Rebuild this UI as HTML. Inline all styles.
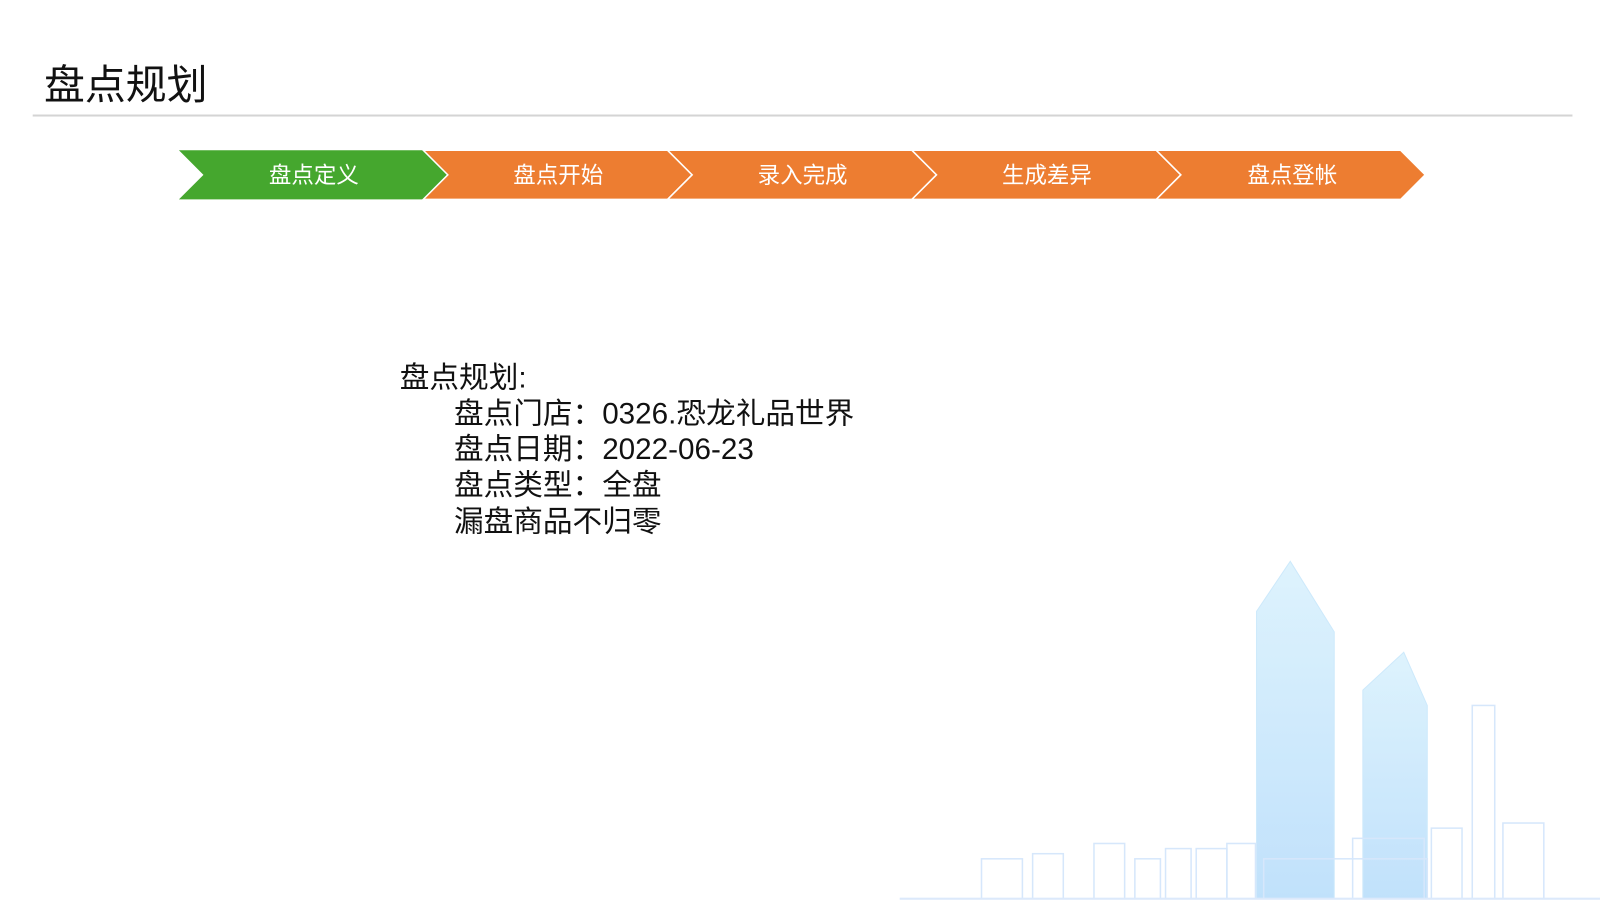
<!DOCTYPE html>
<html><head><meta charset="utf-8"><style>
body{margin:0;width:1600px;height:900px;background:#fff;overflow:hidden;position:relative;font-family:"Liberation Sans","Noto Sans CJK SC",sans-serif}
#w{position:absolute;left:0;top:0;width:1565px;height:880px;transform:scale(1.0224);transform-origin:0 0}
.t{position:absolute;left:43px;top:58px;font-size:40px;color:#111;line-height:52px}
.hr{position:absolute;left:32px;top:112px;width:1506px;height:2px;background:#d4d4d4}
.b{position:absolute;font-size:29px;color:#111;line-height:35px}
</style></head><body><div id="w">
<div class="t">盘点规划</div>
<div class="hr"></div>
<svg style="position:absolute;left:0;top:0" width="1565" height="880">
<defs><linearGradient id="g" x1="0" y1="0" x2="0" y2="1"><stop offset="0" stop-color="#d8f1fd"/><stop offset="1" stop-color="#b6dcfb"/></linearGradient></defs>
<polygon points="175,147 414,147 438,171 414,195 175,195 199,171" fill="#45a72e"/>
<g fill="#ed7d31" stroke="#fff" stroke-width="1.5">
<polygon points="414,147 653,147 677,171 653,195 414,195 438,171"/>
<polygon points="653,147 892,147 916,171 892,195 653,195 677,171"/>
<polygon points="892,147 1131,147 1155,171 1131,195 892,195 916,171"/>
<polygon points="1131,147 1370,147 1394,171 1370,195 1131,195 1155,171"/>
</g>
<g font-size="22" fill="#fff" text-anchor="middle" font-family="Liberation Sans,Noto Sans CJK SC,sans-serif">
<text x="307" y="179">盘点定义</text><text x="546" y="179">盘点开始</text><text x="785" y="179">录入完成</text><text x="1024" y="179">生成差异</text><text x="1264" y="179">盘点登帐</text>
</g>
<g opacity="0.85">
<polygon points="1229,598 1262,549 1305,618 1305,880 1229,880" fill="url(#g)" stroke="#c5e6fb"/>
<polygon points="1333,675 1373,638 1396,690 1396,880 1333,880" fill="url(#g)" stroke="#c5e6fb"/>
<g fill="none" stroke="#cfe3fb" stroke-width="1.5">
<rect x="1236" y="840" width="160" height="40"/><rect x="1323" y="820" width="70" height="60"/>
<rect x="1400" y="810" width="30" height="70"/><rect x="1440" y="690" width="22" height="190"/>
<rect x="1470" y="805" width="40" height="75"/>
<rect x="1070" y="825" width="30" height="55"/><rect x="1110" y="840" width="25" height="40"/><rect x="1140" y="830" width="25" height="50"/><rect x="1170" y="830" width="30" height="50"/><rect x="1200" y="825" width="28" height="55"/>
<rect x="1010" y="835" width="30" height="45"/><rect x="960" y="840" width="40" height="40"/>
</g>
<rect x="880" y="878" width="700" height="3" fill="#d6e6fb"/>
</g>
</svg>
<div class="b" style="left:391px;top:353px">盘点规划:</div>
<div class="b" style="left:444px;top:388px">盘点门店：0326.恐龙礼品世界</div>
<div class="b" style="left:444px;top:423px">盘点日期：2022-06-23</div>
<div class="b" style="left:444px;top:458px">盘点类型：全盘</div>
<div class="b" style="left:444px;top:494px">漏盘商品不归零</div>
</div></body></html>
